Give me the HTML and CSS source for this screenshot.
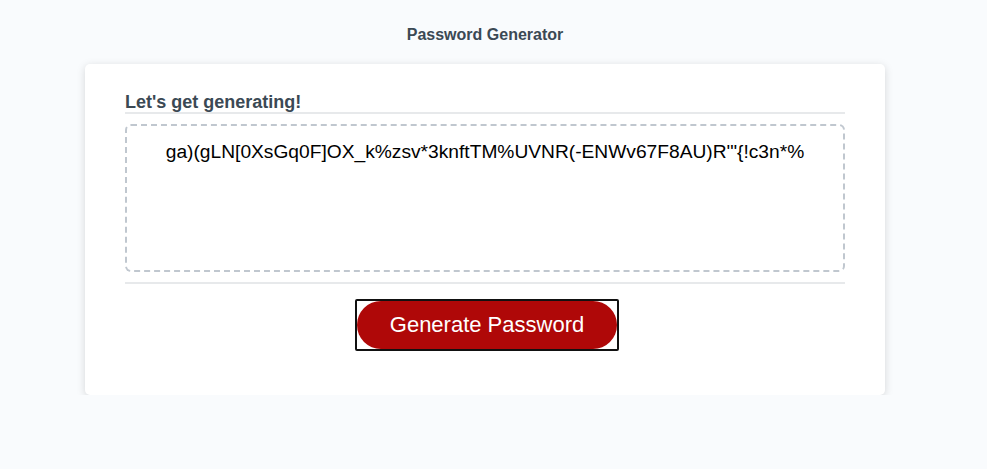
FILE: index.html
```html
<!DOCTYPE html>
<html lang="en">
<head>
<meta charset="UTF-8">
<title>Password Generator</title>
<link rel="stylesheet" href="styles.css">
</head>
<body>
<div class="wrapper">
  <header class="page-header">
    <h1 class="page-title">Password Generator</h1>
  </header>
  <div class="card">
    <div class="card-header">
      <h2 class="card-title">Let's get generating!</h2>
    </div>
    <div class="card-body">
      <textarea readonly id="password" class="password" aria-label="Generated Password">ga)(gLN[0XsGq0F]OX_k%zsv*3knftTM%UVNR(-ENWv67F8AU)R'"{!c3n*%</textarea>
    </div>
    <div class="card-footer">
      <span class="focus-ring"><button id="generate" class="btn">Generate Password</button></span>
    </div>
  </div>
</div>
</body>
</html>
```

FILE: styles.css
```css
* { box-sizing: border-box; }

body {
  margin: 0;
  padding: 0 17px 0 0;
  font-family: "Liberation Sans", Arial, sans-serif;
  background-color: #f9fbfd;
}

.wrapper {
  padding: 26px 20px 0 20px;
}

.page-header {
  text-align: center;
  padding: 0 20px 20px 20px;
  color: hsl(206, 17%, 28%);
}

.page-title {
  margin: 0;
  font-size: 16px;
  font-weight: bold;
}

.card {
  background-color: #ffffff;
  border-radius: 5px;
  box-shadow: rgba(0, 0, 0, 0.15) 0 2px 8px 0;
  color: hsl(206, 17%, 28%);
  font-size: 18px;
  margin: 0 auto;
  max-width: 800px;
  padding: 28px 40px 28px 40px;
}

.card-title {
  margin: 0;
  font-size: 18px;
  font-weight: bold;
  line-height: 20px;
}

.card-header::after {
  content: "";
  display: block;
  width: 100%;
  background: #e7e9eb;
  height: 2px;
}

.card-body {
  min-height: 100px;
}

.password {
  display: block;
  width: 100%;
  height: 148px;
  margin: 10px 0 10px 0;
  padding: 15px 15px 85px 15px;
  font-family: "Liberation Sans", Arial, sans-serif;
  font-size: 19.2px;
  line-height: 22px;
  color: #000;
  text-align: center;
  border: 2px dashed #c0c7cf;
  border-radius: 6px;
  resize: none;
  overflow: hidden;
  outline: none;
  background: #fff;
}

.card-footer {
  text-align: center;
}

.card-footer::before {
  content: "";
  display: block;
  width: 100%;
  background: #e7e9eb;
  height: 2px;
}

.focus-ring {
  display: inline-block;
  margin: 15px 0 16px 4px;
  border: 2px solid #111;
  border-radius: 2px;
  line-height: 0;
}

.btn {
  border: none;
  background-color: hsl(360, 91%, 36%);
  border-radius: 25px;
  color: #ffffff;
  font-family: "Liberation Sans", Arial, sans-serif;
  font-size: 22px;
  line-height: 22px;
  padding: 13px 33px;
  margin: 0;
  cursor: pointer;
}
```
